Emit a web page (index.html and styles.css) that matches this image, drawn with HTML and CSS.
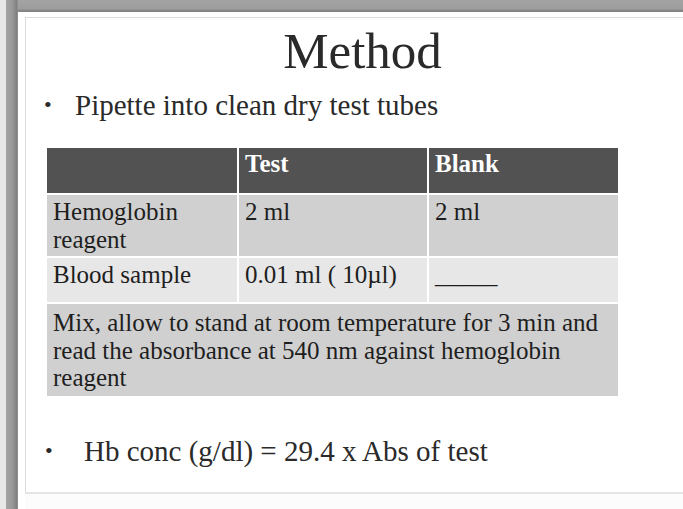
FILE: index.html
```html
<!DOCTYPE html>
<html>
<head>
<meta charset="utf-8">
<link rel="stylesheet" href="styles.css">
</head>
<body>
<div class="screen">
  <div class="strip"></div>
  <div class="frame">
    <div class="topband"></div>
    <div class="slide">
      <div class="inner">
        <h1 class="title">Method</h1>
        <ul class="bullets">
          <li>Pipette into clean dry test tubes</li>
        </ul>
        <table class="grid">
          <tr class="head">
            <th class="c1"></th>
            <th class="c2">Test</th>
            <th class="c3">Blank</th>
          </tr>
          <tr class="odd r1">
            <td>Hemoglobin reagent</td>
            <td>2 ml</td>
            <td>2 ml</td>
          </tr>
          <tr class="even r2">
            <td>Blood sample</td>
            <td>0.01 ml ( 10µl)</td>
            <td>_____</td>
          </tr>
          <tr class="odd r3">
            <td colspan="3" class="mix">Mix, allow to stand at room temperature for 3 min and read the absorbance at 540 nm against hemoglobin reagent</td>
          </tr>
        </table>
        <ul class="bullets formula">
          <li>Hb conc (g/dl) = 29.4 x Abs of test</li>
        </ul>
      </div>
      <div class="footer"></div>
    </div>
  </div>
</div>
</body>
</html>
```
FILE: styles.css
```css
html, body {
  margin: 0;
  padding: 0;
  width: 683px;
  height: 509px;
  overflow: hidden;
  background: #ffffff;
  font-family: "Liberation Serif", "Times New Roman", serif;
}
.screen {
  display: flex;
  width: 683px;
  height: 509px;
}
.strip {
  width: 6px;
  background: #e8e8e8;
  flex: none;
}
.frame {
  flex: 1;
  display: flex;
  flex-direction: column;
  background: linear-gradient(to right, #a4a4a4 0, #999 6px, #8a8a8a 9px, #7d7d7d 11px, #a0a0a0 12px);
  min-width: 0;
}
.topband {
  height: 12px;
  flex: none;
  margin-left: 12px;
  background: linear-gradient(to bottom, #a3a3a3 0, #9d9d9d 9px, #7e7e7e 11px, #8c8c8c 12px);
}
.slide {
  flex: 1;
  margin-left: 12px;
  background: #ffffff;
  padding: 5px 0 0 7px;
  display: flex;
  flex-direction: column;
}
.inner {
  flex: 1;
  border-top: 1px solid #dcdcdc;
  border-left: 1px solid #dcdcdc;
}
.title {
  margin: 0;
  padding: 8px 0 0 16px;
  text-align: center;
  font-weight: normal;
  font-size: 51px;
  line-height: 50px;
  color: #2a2a2a;
}
.bullets {
  margin: 0;
  padding: 0;
  list-style: none;
}
.bullets li {
  position: relative;
  font-size: 29px;
  line-height: 34px;
  color: #2a2a2a;
  padding-left: 49px;
  margin-top: 12px;
}
.bullets li::before {
  content: "•";
  position: absolute;
  left: 18px;
  top: 0;
  font-size: 22px;
}
.grid {
  border-collapse: separate;
  border-spacing: 2px;
  margin: 24px 0 0 19px;
  width: 575px;
  table-layout: fixed;
  font-size: 25px;
  line-height: 27.5px;
  color: #1e1e1e;
}
.grid th, .grid td {
  box-sizing: border-box;
  text-align: left;
  vertical-align: top;
  padding: 3px 5px 0 6px;
}
.grid .c1 { width: 190px; }
.grid .c2 { width: 188px; }
.grid .c3 { width: 189px; }
.head { height: 45px; }
.r1 { height: 61px; }
.r2 { height: 44px; }
.r3 { height: 92px; }
.head th {
  background: #525252;
  color: #ffffff;
  font-weight: bold;
  padding-top: 2px;
}
.odd td { background: #d0d0d0; }
.even td { background: #e7e7e7; }
.grid td.mix { padding-top: 5px; }
.formula li {
  padding-left: 58px;
  margin-top: 36px;
}
.formula li::before {
  left: 19px;
}
.footer {
  height: 15px;
  flex: none;
  border-top: 2px solid #e4e4e4;
  background: #fcfcfc;
}
```
